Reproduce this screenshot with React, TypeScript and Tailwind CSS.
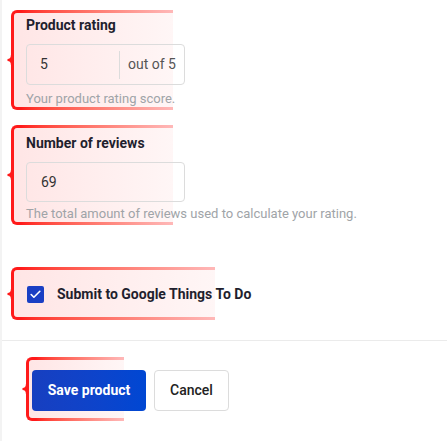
import { Check } from 'lucide-react';

type BracketProps = {
  className: string;
};

// red annotation bracket drawn behind a highlighted block
function Bracket({ className }: BracketProps) {
  return (
    <div className={`pointer-events-none absolute z-0 ${className}`}>
      <div className="absolute inset-0 rounded-l-[6px] bg-gradient-to-r from-[#ffe5e5] to-[#fff6f6]" />
      <div className="absolute bottom-0 left-0 top-0 w-[10px] rounded-l-[6px] border-y-[3px] border-l-[3px] border-[#ff1a1a]" />
      <div className="absolute left-[10px] right-0 top-0 h-[3px] bg-gradient-to-r from-[#ff1a1a] to-[#ffb8b8]" />
      <div className="absolute bottom-0 left-[10px] right-0 h-[3px] bg-gradient-to-r from-[#ff1a1a] to-[#ffb8b8]" />
      <svg
        className="absolute left-[-4px] top-1/2 -translate-y-1/2"
        width="6"
        height="10"
        viewBox="0 0 6 10"
        fill="none"
      >
        <path d="M5 0 Q5 5 0.5 5 Q5 5 5 10" stroke="#ff1a1a" strokeWidth="2.2" />
      </svg>
    </div>
  );
}

export default function App() {
  return (
    <div
      className="relative flex h-[441px] w-full overflow-hidden bg-white text-[#1f1f2e]"
      style={{ fontFamily: 'Roboto, "Liberation Sans", Arial, sans-serif' }}
    >
      <div className="w-[2px] shrink-0 bg-[#f3f3f3]" />

      <Bracket className="left-[11px] top-[10px] h-[100px] w-[162px]" />
      <Bracket className="left-[11px] top-[125px] h-[100px] w-[162px]" />
      <Bracket className="left-[11px] top-[267px] h-[53px] w-[204px]" />
      <Bracket className="left-[26px] top-[357px] h-[64px] w-[98px]" />

      <div className="relative z-10 flex flex-1 flex-col">
        <div className="flex flex-col pl-[24px]">
          {/* product rating */}
          <label className="mt-[15px] text-[14px] font-bold leading-[20px]">Product rating</label>
          <div className="mt-[9px] flex h-[41px] w-[159px] items-center rounded-[4px] border border-[#dcdcdc] text-[14px] text-[#333]">
            <span className="w-[92px] pl-[13px]">5</span>
            <span className="h-[28px] w-px bg-[#dcdcdc]" />
            <span className="pl-[8px] text-[#555]">out of 5</span>
          </div>
          <p className="mt-[6px] text-[13px] leading-[16px] text-[#a0a4a8]">Your product rating score.</p>

          {/* number of reviews */}
          <label className="mt-[26px] text-[14px] font-bold leading-[20px]">Number of reviews</label>
          <div className="mt-[9px] flex h-[40px] w-[159px] items-center rounded-[4px] border border-[#dcdcdc] pl-[14px] text-[14px] text-[#333]">
            69
          </div>
          <p className="mt-[4px] text-[13px] leading-[16px] text-[#a0a4a8]">
            The total amount of reviews used to calculate your rating.
          </p>

          {/* google things to do */}
          <div className="mt-[62px] flex items-center gap-[13px] pl-[1px]">
            <span className="flex h-[17px] w-[17px] items-center justify-center rounded-[2px] bg-[#1a3fc4]">
              <Check size={13} strokeWidth={3} className="text-white" />
            </span>
            <span className="text-[14px] font-bold leading-[20px]">Submit to Google Things To Do</span>
          </div>
        </div>

        <div className="mt-[36px] h-px w-full bg-[#ebebeb]" />

        <div className="mt-[29px] flex gap-[8px] pl-[30px]">
          <button className="h-[41px] w-[114px] rounded-[4px] bg-gradient-to-r from-[#173fc0] to-[#0047d3] text-[14px] font-bold text-white">
            Save product
          </button>
          <button className="h-[41px] w-[75px] rounded-[4px] border border-[#dcdcdc] bg-white text-[14px] font-medium text-[#222]">
            Cancel
          </button>
        </div>
      </div>
    </div>
  );
}
